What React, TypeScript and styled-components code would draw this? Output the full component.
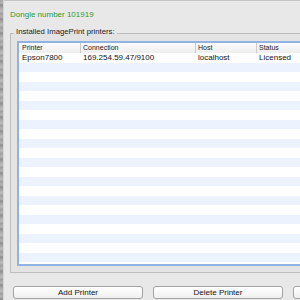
import styled, { createGlobalStyle } from "styled-components";

const GlobalStyle = createGlobalStyle`
  html, body {
    margin: 0;
    padding: 0;
    background: #e8e8e8;
    font-family: "Liberation Sans", Arial, sans-serif;
  }
`;

const columns = [
  { title: "Printer", width: 61 },
  { title: "Connection", width: 115 },
  { title: "Host", width: 61 },
  { title: "Status", width: 80 },
];

const printers = [
  ["Epson7800", "169.254.59.47/9100", "localhost", "Licensed"],
];

const ROW_COUNT = 23;

const App = () => {
  const rows = Array.from({ length: ROW_COUNT }, (_, i) => printers[i] || null);

  return (
    <>
      <GlobalStyle />
      <Screen>
        <Edge />
        <Window>
          <Dongle>Dongle number 101919</Dongle>
          <Group>
            <Legend>Installed ImagePrint printers:</Legend>
            <TableFrame>
              <HeaderRow>
                {columns.map((col, i) => (
                  <HeadCell key={col.title} $width={col.width} $first={i === 0}>
                    {col.title}
                  </HeadCell>
                ))}
              </HeaderRow>
              <Body>
                {rows.map((row, r) => (
                  <Row key={r} $striped={r % 2 === 1}>
                    {columns.map((col, c) => (
                      <Cell key={col.title} $width={col.width}>
                        {row ? row[c] : ""}
                      </Cell>
                    ))}
                  </Row>
                ))}
              </Body>
            </TableFrame>
          </Group>
          <Buttons>
            <Button>Add Printer</Button>
            <Button>Delete Printer</Button>
            {/* third button runs off the window edge, its label is not visible */}
            <Button aria-label="Edit Printer" />
          </Buttons>
        </Window>
      </Screen>
    </>
  );
};

export default App;

const Screen = styled.div`
  display: flex;
  flex-direction: row;
  width: 300px;
  height: 300px;
  overflow: hidden;
`;

const Edge = styled.div`
  flex: none;
  width: 3px;
  border-right: 1px solid #d6d6d6;
  background: repeating-linear-gradient(
    180deg,
    #a4a4a4 0px,
    #b4b4b4 3px,
    #8e8e8e 5px,
    #a9a9a9 8px,
    #bcbcbc 11px,
    #9a9a9a 14px
  );
`;

const Window = styled.div`
  flex: 1;
  display: flex;
  flex-direction: column;
  border-top: 1px solid #c4c4c4;
  padding-left: 6px;
  min-width: 0;
`;

const Dongle = styled.div`
  margin-top: 9px;
  font-size: 8px;
  line-height: 9px;
  color: #2f9a2c;
`;

const Group = styled.fieldset`
  margin: 8px -40px 0 0;
  padding: 2px 0 6px 6px;
  min-width: 0;
  border: 1px solid #bdbdbd;
  background: #e3e3e3;
`;

const Legend = styled.legend`
  margin-left: -3px;
  padding: 0 2px 2px;
  font-size: 7.75px;
  line-height: 10px;
  color: #1a1a1a;
`;

const TableFrame = styled.div`
  border: 2px solid #8fb3e3;
  background: #ffffff;
  display: flex;
  flex-direction: column;
`;

const HeaderRow = styled.div`
  display: flex;
  height: 10px;
  background: linear-gradient(#fbfbfb, #eeeeee);
`;

const HeadCell = styled.div<{ $width: number; $first: boolean }>`
  flex: none;
  box-sizing: border-box;
  width: ${(p) => p.$width}px;
  padding-left: ${(p) => (p.$first ? 3 : 2)}px;
  border-left: ${(p) => (p.$first ? "none" : "1px solid #c9c9c9")};
  font-size: 7px;
  line-height: 10px;
  color: #222;
  white-space: nowrap;
`;

const Body = styled.div`
  height: 211px;
  overflow: hidden;
`;

const Row = styled.div<{ $striped: boolean }>`
  display: flex;
  height: 9.5px;
  background: ${(p) => (p.$striped ? "#edf3fe" : "#ffffff")};
`;

const Cell = styled.div<{ $width: number }>`
  flex: none;
  box-sizing: border-box;
  width: ${(p) => p.$width}px;
  padding-left: 3px;
  font-size: 8px;
  line-height: 10.5px;
  color: #111;
  white-space: nowrap;
`;

const Buttons = styled.div`
  display: flex;
  gap: 10px;
  margin-top: 13px;
  padding-left: 3px;
`;

const Button = styled.button`
  flex: none;
  width: 130px;
  height: 13px;
  padding: 0;
  border: 1px solid #a3a3a3;
  border-radius: 3px;
  background: linear-gradient(#ffffff, #efefef);
  font-family: "Liberation Sans", Arial, sans-serif;
  font-size: 8px;
  line-height: 11px;
  color: #111;
`;
